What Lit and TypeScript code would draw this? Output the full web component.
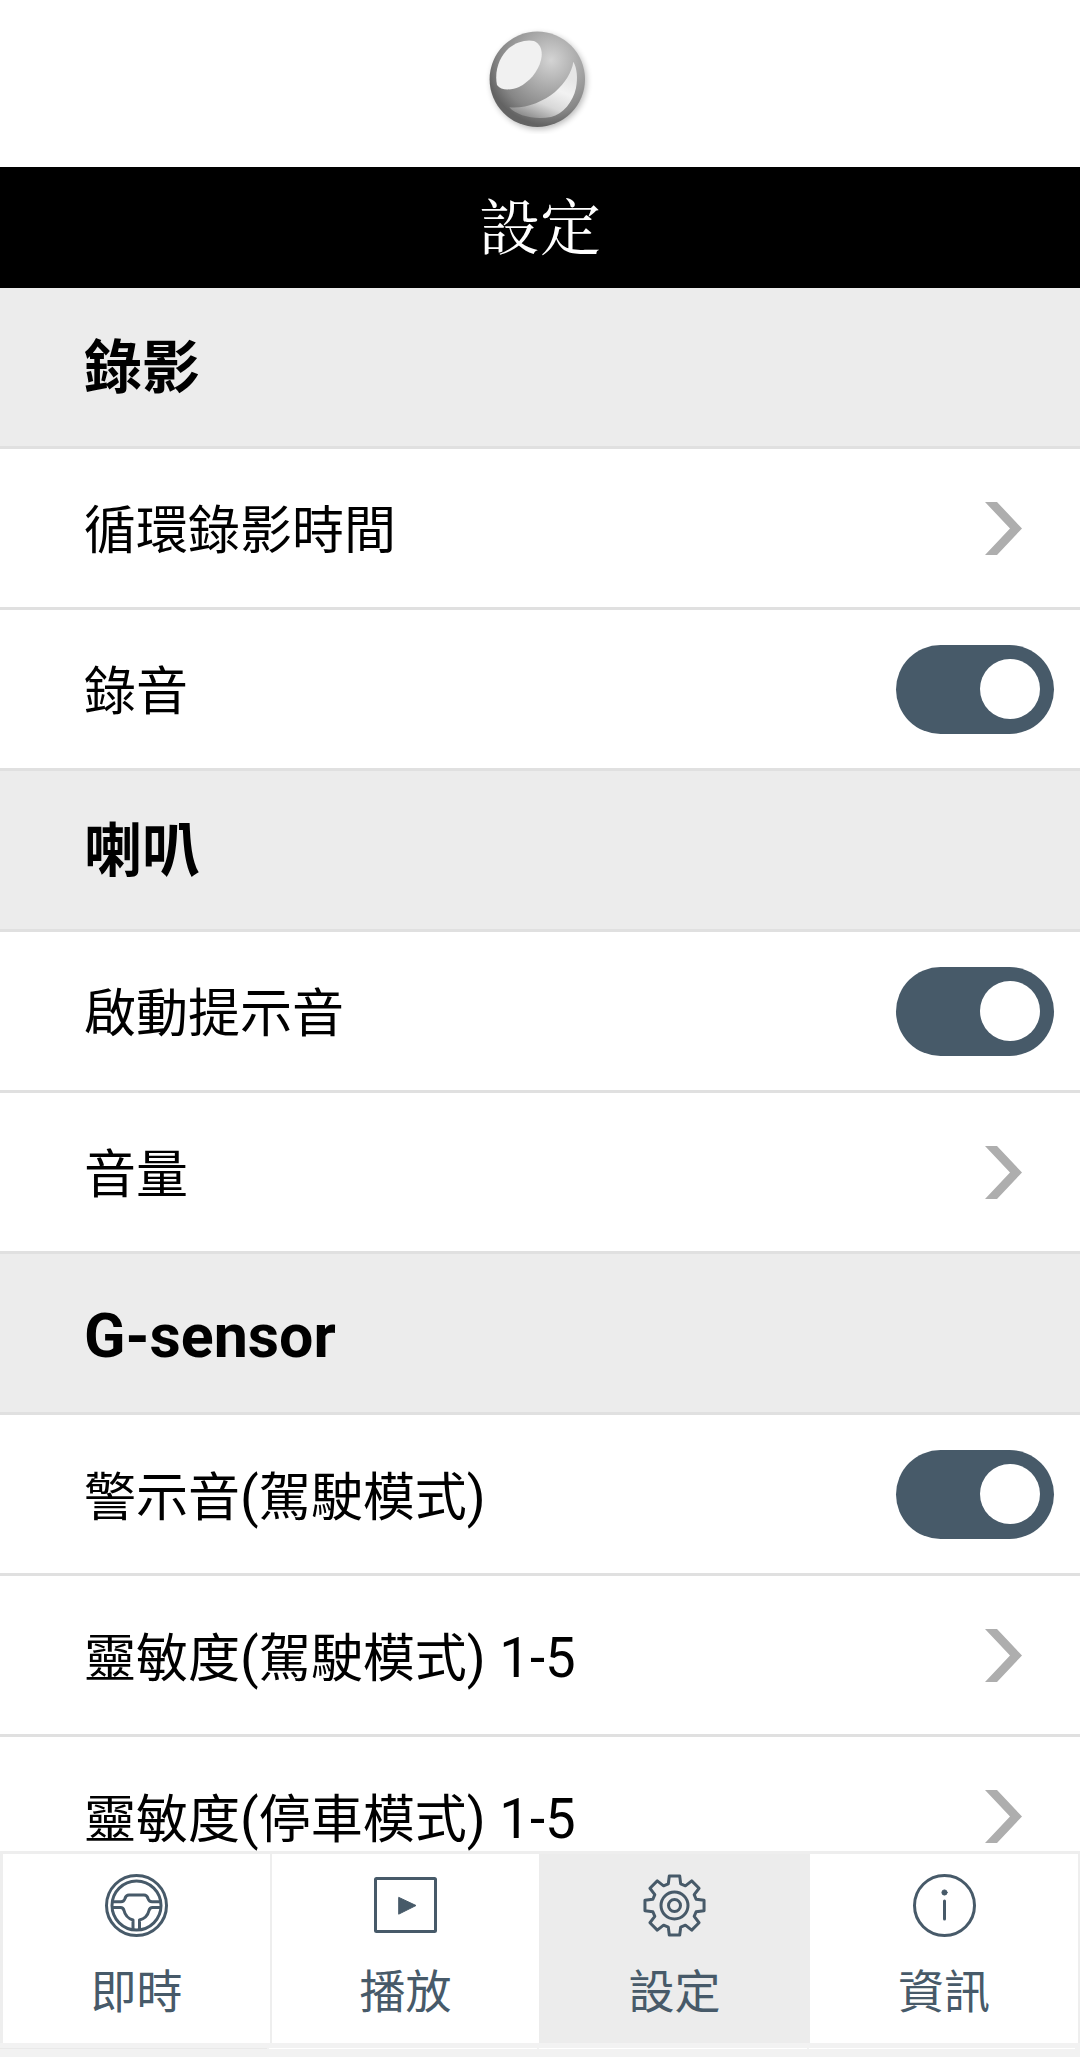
import { LitElement, html, css, svg } from 'lit';
import { customElement } from 'lit/decorators.js';

type Row = { label: string; kind: 'link' | 'toggle' };
type Section = { title: string; rows: Row[] };

const SECTIONS: Section[] = [
  {
    title: '錄影',
    rows: [
      { label: '循環錄影時間', kind: 'link' },
      { label: '錄音', kind: 'toggle' },
    ],
  },
  {
    title: '喇叭',
    rows: [
      { label: '啟動提示音', kind: 'toggle' },
      { label: '音量', kind: 'link' },
    ],
  },
  {
    title: 'G-sensor',
    rows: [
      { label: '警示音(駕駛模式)', kind: 'toggle' },
      { label: '靈敏度(駕駛模式) 1-5', kind: 'link' },
      { label: '靈敏度(停車模式) 1-5', kind: 'link' },
    ],
  },
];

// the latin runs are a touch bigger than the CJK ones in the app's font
function mixed(text: string) {
  return text
    .split(/([\x20-\x7e]+)/)
    .filter((part) => part)
    .map((part) => (/^[\x20-\x7e]/.test(part) ? html`<span class="latin">${part}</span>` : part));
}

// 8 tooth gear outline, centred on 31.5/31.5
function gearPath(): string {
  const pts: string[] = [];
  const pt = (r: number, deg: number) => {
    const a = ((deg - 90) * Math.PI) / 180;
    return `${(31.5 + r * Math.cos(a)).toFixed(2)} ${(31.5 + r * Math.sin(a)).toFixed(2)}`;
  };
  for (let i = 0; i < 8; i++) {
    const c = i * 45;
    pts.push(pt(22.5, c - 16), pt(30, c - 10), pt(30, c + 10), pt(22.5, c + 16));
  }
  return 'M' + pts.join('L') + 'Z';
}

const wheelIcon = svg`
  <circle cx="31.5" cy="31.5" r="30" />
  <circle cx="31.5" cy="31.5" r="24.5" />
  <path d="M7.5 27.8H16C19 27.8 19.5 26 20 24.5C20.6 22.4 21.8 21 24 21H39C41.2 21 42.4 22.4 43 24.5C43.5 26 44 27.8 47 27.8H55.5" />
  <path d="M7.5 33.5H15.5C18 33.5 18.6 35 19 36.5C20 41 23 44.5 28 46V55.5M55.5 33.5H47.5C45 33.5 44.4 35 44 36.5C43 41 40 44.5 34.5 46V55.5" />
`;

const playIcon = svg`
  <rect x="1.5" y="4.5" width="60" height="53" rx="1" />
  <path class="solid" d="M25 23.5L42 31.5L25 40Z" />
`;

const gearIcon = svg`
  <path d=${gearPath()} />
  <circle cx="31.5" cy="31.5" r="13.5" />
  <circle cx="31.5" cy="31.5" r="6" />
`;

const infoIcon = svg`
  <circle cx="31.5" cy="31.5" r="30" />
  <circle class="solid" cx="31.5" cy="18.5" r="2.6" />
  <path d="M31.5 27V45" />
`;

const TABS = [
  { label: '即時', icon: wheelIcon },
  { label: '播放', icon: playIcon },
  { label: '設定', icon: gearIcon, active: true },
  { label: '資訊', icon: infoIcon },
];

@customElement('app-root')
export class AppRoot extends LitElement {
  static styles = css`
    :host {
      display: block;
      font-family: Roboto, 'Noto Sans CJK TC', sans-serif;
      color: #000;
    }

    .page {
      display: flex;
      flex-direction: column;
      height: 2057px;
      overflow: hidden;
      background: #f2f2f2;
    }

    .logo {
      flex: none;
      height: 167px;
      background: #fff;
      display: flex;
      justify-content: center;
      align-items: flex-start;
      padding-top: 24px;
      box-sizing: border-box;
    }

    .title {
      flex: none;
      height: 121px;
      background: #000;
      color: #fff;
      font-family: 'Noto Serif CJK TC', serif;
      font-size: 61px;
      line-height: 113px;
      text-align: center;
    }

    .list {
      flex: 1;
      min-height: 0;
      overflow: hidden;
    }

    .section,
    .row {
      height: 161px;
      box-sizing: border-box;
      border-bottom: 3px solid #e0e0e0;
      display: flex;
      align-items: center;
      padding-left: 84px;
      line-height: 70px;
    }

    .latin {
      font-size: 1.05em;
    }

    .section {
      background: #ececec;
      font-size: 58px;
      font-weight: 700;
      padding-top: 2px;
    }

    .section.roman {
      padding-top: 8px;
    }

    .row {
      background: #fff;
      font-size: 52px;
      justify-content: space-between;
    }

    .row > .label {
      margin-top: 8px;
    }

    .chevron {
      width: 37px;
      height: 53px;
      margin-right: 58px;
      fill: #aeaeae;
    }

    .toggle {
      width: 158px;
      height: 89px;
      margin-right: 26px;
      border-radius: 45px;
      background: #475a69;
      display: flex;
      align-items: center;
      justify-content: flex-end;
      padding-right: 14px;
      box-sizing: border-box;
    }

    .toggle span {
      width: 60px;
      height: 60px;
      border-radius: 50%;
      background: #fff;
    }

    .tabs {
      flex: none;
      height: 192px;
      box-sizing: border-box;
      border-top: 3px solid #eee;
      background: #eee;
      display: grid;
      grid-template-columns: 267px 269px 271px 268px;
      padding: 0 2px 0 3px;
    }

    .tab {
      background: #fff;
      color: #475a69;
      display: flex;
      flex-direction: column;
      align-items: center;
      font-size: 46px;
      line-height: 60px;
      padding-top: 20px;
      box-sizing: border-box;
    }

    .tab:nth-child(2) {
      border-left: 2px solid #eee;
    }

    .tab.active {
      background: #ececec;
    }

    .tab svg {
      width: 63px;
      height: 63px;
      margin-bottom: 25px;
      fill: none;
      stroke: #475a69;
      stroke-width: 3;
      stroke-linejoin: round;
      stroke-linecap: round;
    }

    .tab svg .solid {
      fill: #475a69;
      stroke-width: 1;
    }

    .under {
      flex: none;
      height: 14px;
      box-sizing: border-box;
      padding: 5px 5px 0 0;
      display: grid;
      grid-template-columns: 267px 268px 268px 1fr;
      column-gap: 2px;
    }

    .under div {
      height: 1px;
      background: #fff;
    }

    .under div:first-child {
      background: #e9e9e9;
    }
  `;

  renderLogo() {
    return html`
      <svg class="mark" width="110" height="110" viewBox="0 0 110 110">
        <defs>
          <radialGradient id="ball" gradientUnits="userSpaceOnUse" cx="66" cy="36" r="66">
            <stop offset="0" stop-color="#d4d4d4" />
            <stop offset="0.45" stop-color="#a8a8a8" />
            <stop offset="0.8" stop-color="#868686" />
            <stop offset="1" stop-color="#636363" />
          </radialGradient>
          <linearGradient id="crescent" x1="0.3" y1="1" x2="0.7" y2="0.2">
            <stop offset="0" stop-color="#8e8e8e" />
            <stop offset="0.35" stop-color="#d8d8d8" />
            <stop offset="0.7" stop-color="#f2f2f2" />
            <stop offset="1" stop-color="#e6e6e6" />
          </linearGradient>
          <filter id="soft" x="-20%" y="-20%" width="140%" height="140%">
            <feGaussianBlur stdDeviation="3" />
          </filter>
        </defs>
        <circle cx="54" cy="57.5" r="47.5" fill="#000" opacity="0.28" filter="url(#soft)" />
        <circle cx="52.3" cy="55.3" r="47.7" fill="url(#ball)" />
        <path d="M12 61C9 46 15 32 24 24C31 18 42 15 49 17C56 20 58 28 56 36C53 48 44 58 34 63C27 66 16 67 12 61Z" fill="#f1f1f1" />
        <path d="M24.3 83.3C40 85 58 78 70 68C80 59 87 48 88.3 37.7C92 44 93 54 91 64C88 78 78 90 66 93C50 96 32 92 24.3 83.3Z" fill="url(#crescent)" />
      </svg>
    `;
  }

  renderRow(row: Row) {
    return html`
      <div class="row">
        <span class="label">${mixed(row.label)}</span>
        ${row.kind === 'toggle'
          ? html`<div class="toggle"><span></span></div>`
          : html`<svg class="chevron" viewBox="0 0 37 53"><path d="M0 0H12L37 26.5L12 53H0L25 26.5Z" /></svg>`}
      </div>
    `;
  }

  render() {
    return html`
      <div class="page">
        <div class="logo">${this.renderLogo()}</div>
        <div class="title">設定</div>
        <div class="list">
          ${SECTIONS.map(
            (s) => html`
              <div class="section ${/^[\x20-\x7e]+$/.test(s.title) ? 'roman' : ''}"><span>${mixed(s.title)}</span></div>
              ${s.rows.map((r) => this.renderRow(r))}
            `,
          )}
        </div>
        <nav class="tabs">
          ${TABS.map(
            (t) => html`
              <div class="tab ${t.active ? 'active' : ''}">
                <svg viewBox="0 0 63 63">${t.icon}</svg>
                <span>${t.label}</span>
              </div>
            `,
          )}
        </nav>
        <div class="under"><div></div><div></div><div></div><div></div></div>
      </div>
    `;
  }
}
